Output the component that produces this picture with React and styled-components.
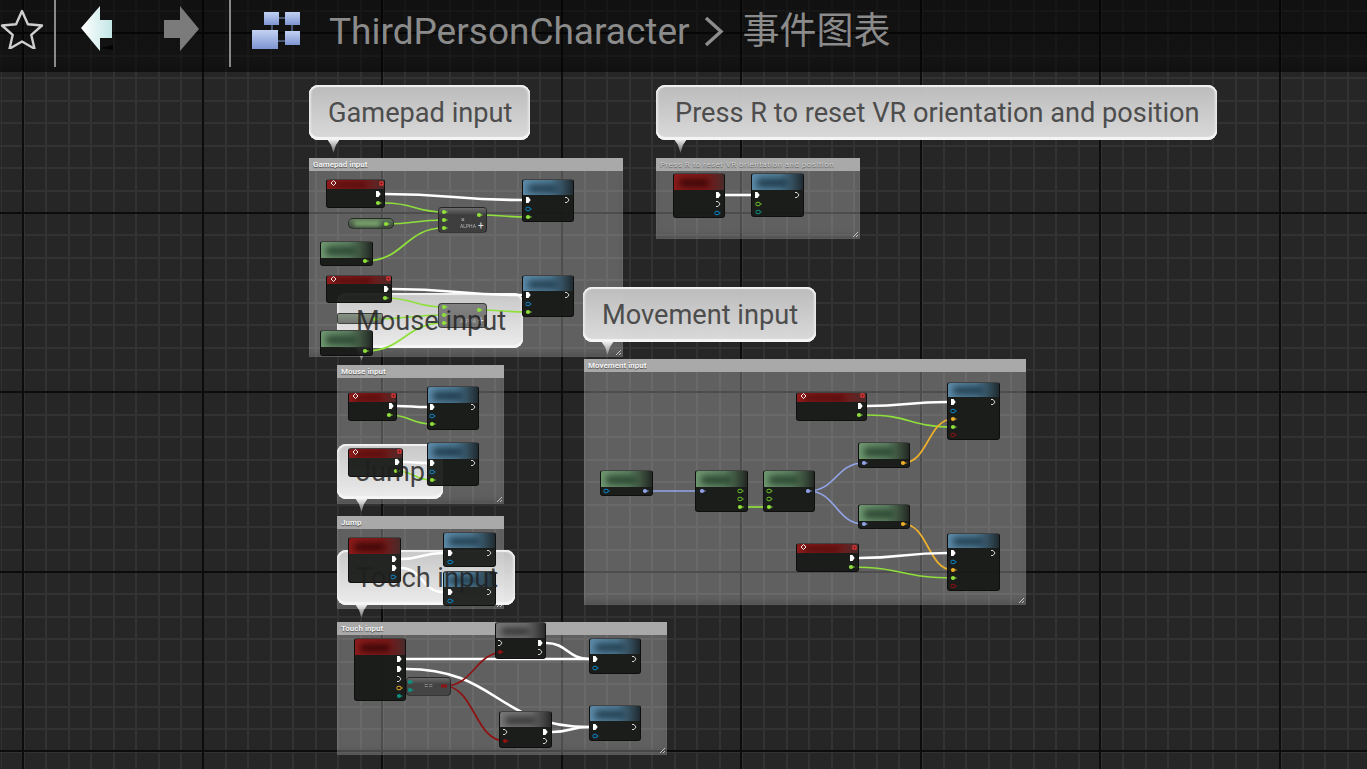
import React from "react";
import styled, { createGlobalStyle } from "styled-components";

const Global = createGlobalStyle`
  html, body { margin: 0; padding: 0; background: #262626; overflow: hidden; }
  #root { width: 1367px; height: 769px; }
`;

const Canvas = styled.div`
  position: relative;
  width: 1367px;
  height: 769px;
  overflow: hidden;
  font-family: Roboto, "Noto Sans CJK SC", sans-serif;
  background-color: #262626;
  background-image:
    repeating-linear-gradient(to right, transparent 0 22px, #0c0c0c 22px 24px, transparent 24px 179.5px),
    repeating-linear-gradient(to bottom, transparent 0 32px, #0c0c0c 32px 34px, transparent 34px 179.5px),
    repeating-linear-gradient(to right, transparent 0 0.5px, #323232 0.5px 2.5px, transparent 2.5px 22.44px),
    repeating-linear-gradient(to bottom, transparent 0 10px, #323232 10px 12px, transparent 12px 22.44px);
`;

const TopBar = styled.header`
  position: relative;
  z-index: 6;
  display: flex;
  align-items: flex-start;
  height: 72px;
  background: linear-gradient(to bottom, rgba(0,0,0,.56) 0, rgba(0,0,0,.5) 85%, rgba(0,0,0,.58) 100%);
  box-sizing: border-box;
`;

const Divider = styled.div`
  width: 2px;
  height: 67px;
  background: #8a8a8a;
  margin: 0 ${p => p.$right}px 0 ${p => p.$left}px;
`;

const IconSlot = styled.div`
  display: flex;
  flex: none;
  width: ${p => p.$w}px;
  margin-left: ${p => p.$ml || 0}px;
  margin-top: ${p => p.$mt || 0}px;
  filter: ${p => p.$soft ? "blur(.6px)" : "none"};
`;

const Crumb = styled.span`
  color: #8b8b8b;
  font-size: ${p => p.$size}px;
  line-height: 64px;
  white-space: nowrap;
  margin-left: ${p => p.$ml || 0}px;
`;

const Comment = styled.section`
  position: absolute;
  left: ${p => p.$x}px;
  top: ${p => p.$y}px;
  width: ${p => p.$w}px;
  height: ${p => p.$h}px;
  box-sizing: border-box;
  background: rgba(255,255,255,.27);
  box-shadow: inset 0 -6px 8px -4px rgba(0,0,0,.22), inset 0 0 0 1px rgba(255,255,255,.05);
  z-index: 1;
`;

const CommentHead = styled.h4`
  margin: 0;
  height: 13px;
  padding-left: 4px;
  background: #a9a9a9;
  color: ${p => p.$dim ? "#cfcfcf" : "#f2f2f2"};
  font-size: 8px;
  line-height: 14px;
  font-weight: ${p => p.$dim ? 400 : 700};
  letter-spacing: ${p => p.$dim ? ".45px" : "0"};
  text-shadow: 0 1px 1px rgba(0,0,0,.55);
  white-space: nowrap;
  overflow: hidden;
`;

const Grip = styled.svg`
  position: absolute;
  right: 1px;
  bottom: 1px;
`;

const BubbleBox = styled.div`
  position: absolute;
  left: ${p => p.$x}px;
  top: ${p => p.$y}px;
  width: ${p => p.$w}px;
  height: 55px;
  box-sizing: border-box;
  border-radius: 9px;
  box-shadow:
    inset 0 2px 1px #f2f2f2,
    inset 0 -3px 1px #f6f6f6,
    inset 2px 0 2px #e6e6e6,
    inset -2px 0 2px #e6e6e6;
  background: ${p => p.$light
    ? "linear-gradient(to bottom, rgba(208,208,208,.92), rgba(242,242,242,.96))"
    : "linear-gradient(to bottom, rgba(192,192,192,.97), rgba(224,224,224,.97))"};
  z-index: 2;
  &::after {
    content: "";
    position: absolute;
    left: 18px;
    top: 54px;
    width: 13px;
    height: 14px;
    background: linear-gradient(to bottom, #f4f4f4, rgba(225,225,225,.3));
    clip-path: polygon(0 0, 100% 0, 68% 45%, 50% 100%, 32% 45%);
  }
`;

const BubbleText = styled.div`
  position: absolute;
  left: ${p => p.$x + 19}px;
  top: ${p => p.$y}px;
  height: 55px;
  line-height: 57px;
  font-size: 27.2px;
  color: ${p => p.$light ? "rgba(30,30,30,.82)" : "#4d4d4d"};
  white-space: nowrap;
  z-index: 5;
`;

const tones = {
  red: "linear-gradient(to right, #8d1b1b 0%, #7e1818 62%, #4a2a2a 100%)",
  blue: "linear-gradient(to right, #5b8aa8 0%, #4d7892 55%, #1f2a30 100%)",
  green: "linear-gradient(to right, #6e976f 0%, #5c8060 55%, #222822 100%)",
  gray: "linear-gradient(to right, #777 0%, #6e6e6e 60%, #2a2a2a 100%)",
};
const smudges = { red: "#3c0707", blue: "#1f3a4a", green: "#2a4530", gray: "#343434" };

const Node = styled.article`
  position: absolute;
  left: ${p => p.$x}px;
  top: ${p => p.$y}px;
  width: ${p => p.$w}px;
  height: ${p => p.$h}px;
  box-sizing: border-box;
  border: 1px solid rgba(10,12,10,.75);
  border-top-color: rgba(70,72,70,.9);
  border-radius: 3px;
  background: rgba(22,24,22,.93);
  overflow: hidden;
  z-index: 4;
`;

const NodeHead = styled.div`
  position: relative;
  height: ${p => p.$h}px;
  background: ${p => tones[p.$tone]};
  overflow: hidden;
`;

const Smudge = styled.span`
  position: absolute;
  left: 10%;
  right: 30%;
  top: 32%;
  bottom: 18%;
  background: ${p => smudges[p.$tone]};
  filter: blur(3px);
  border-radius: 3px;
`;

const Pill = styled.div`
  position: absolute;
  left: ${p => p.$x}px;
  top: ${p => p.$y}px;
  width: ${p => p.$w}px;
  height: ${p => p.$h}px;
  box-sizing: border-box;
  border: 1px solid rgba(20,22,20,.6);
  border-radius: ${p => p.$r}px;
  background: ${p => p.$bg};
  z-index: 4;
  overflow: hidden;
`;

const PillSmudge = styled.span`
  position: absolute;
  left: 12%;
  right: 30%;
  top: 2px;
  height: 5px;
  background: #7fae6f;
  filter: blur(2px);
`;

const Mini = styled.span`
  position: absolute;
  left: ${p => p.$x}px;
  top: ${p => p.$y}px;
  color: ${p => p.$soft ? "#b4b4b4" : "#e4e4e4"};
  font-size: ${p => p.$size}px;
  line-height: 1;
  white-space: nowrap;
  filter: ${p => p.$soft ? "blur(.4px)" : "none"};
`;

const Layer = styled.svg`
  position: absolute;
  left: 0;
  top: 0;
  z-index: ${p => p.$z};
  pointer-events: none;
`;

const comments = [
  { x: 309, y: 158, w: 314, h: 199, t: "Gamepad input" },
  { x: 656, y: 158, w: 204, h: 81, t: "Press R to reset VR orientation and position", dim: true },
  { x: 337, y: 365, w: 167, h: 139, t: "Mouse input" },
  { x: 337, y: 516, w: 167, h: 93, t: "Jump" },
  { x: 337, y: 622, w: 330, h: 133, t: "Touch input" },
  { x: 584, y: 359, w: 442, h: 246, t: "Movement input" },
];

const bubbles = [
  { x: 309, y: 85, w: 221, t: "Gamepad input" },
  { x: 656, y: 85, w: 561, t: "Press R to reset VR orientation and position" },
  { x: 583, y: 287, w: 233, t: "Movement input" },
  { x: 337, y: 293, w: 186, t: "Mouse input", light: true },
  { x: 337, y: 444, w: 106, t: "Jump", light: true },
  { x: 337, y: 550, w: 178, t: "Touch input", light: true },
];

const nodes = [
  [326, 179, 59, 29, "red", 9],
  [320, 241, 53, 25, "green", 16],
  [522, 179, 52, 43, "blue", 15],
  [326, 275, 66, 28, "red", 8],
  [522, 275, 52, 42, "blue", 15],
  [320, 330, 53, 26, "green", 16],
  [673, 173, 52, 45, "red", 16],
  [751, 173, 53, 44, "blue", 16],
  [348, 392, 49, 29, "red", 9],
  [427, 386, 52, 44, "blue", 16],
  [348, 448, 55, 29, "red", 9],
  [427, 442, 52, 44, "blue", 16],
  [348, 537, 53, 46, "red", 16],
  [443, 532, 53, 35, "blue", 15],
  [443, 571, 53, 35, "blue", 15],
  [354, 638, 52, 63, "red", 16],
  [495, 622, 51, 37, "gray", 15],
  [499, 711, 53, 37, "gray", 15],
  [589, 638, 52, 36, "blue", 15],
  [589, 705, 52, 36, "blue", 15],
  [796, 392, 71, 29, "red", 9],
  [947, 382, 53, 58, "blue", 14],
  [858, 442, 52, 26, "green", 16],
  [858, 504, 52, 25, "green", 16],
  [600, 470, 53, 26, "green", 16],
  [695, 470, 53, 42, "green", 16],
  [763, 470, 52, 42, "green", 16],
  [796, 543, 63, 29, "red", 9],
  [947, 533, 53, 58, "blue", 14],
];

const C = { w: "#ffffff", g: "#8fe03a", v: "#93a4e8", o: "#eeb02a", r: "#8e1212", t: "#0e8f7e", b: "#0a86c8" };

const curve = (a, b, c, d) => {
  const k = Math.max(Math.abs(c - a) * 0.5, 12);
  return `M${a} ${b}C${a + k} ${b} ${c - k} ${d} ${c} ${d}`;
};

const wires = [
  [385, 194, 522, 200, C.w], [385, 203, 444, 212, C.g], [386, 224, 444, 220, C.g], [365, 261, 444, 228, C.g], [479, 215, 528, 217, C.g],
  [392, 289, 522, 295, C.w], [385, 298, 444, 307, C.g], [375, 319, 444, 315, C.g], [365, 351, 444, 323, C.g], [479, 310, 528, 312, C.g],
  [725, 195, 751, 195, C.w],
  [397, 406, 427, 407, C.w], [389, 415, 432, 424, C.g], [403, 462, 427, 463, C.w], [396, 471, 432, 480, C.g],
  [401, 559, 443, 553, C.w], [401, 568, 443, 592, C.w],
  [406, 659, 589, 659, C.w], [546, 643, 589, 659, C.w], [406, 669, 589, 727, C.w], [552, 732, 589, 727, C.w],
  [444, 686, 505, 652, C.r], [444, 686, 505, 741, C.r],
  [867, 406, 947, 402, C.w], [867, 415, 953, 427, C.g], [903, 463, 953, 419, C.o], [903, 524, 953, 570, C.o],
  [645, 491, 702, 491, C.v], [740, 507, 769, 507, C.g], [808, 491, 864, 463, C.v], [808, 491, 864, 524, C.v],
  [859, 558, 947, 553, C.w], [851, 567, 953, 578, C.g],
];

const pins = [
  ["e", 378, 194], ["d", 378, 203, C.g], ["e", 528, 200], ["x", 567, 200], ["h", 528, 209, C.b], ["d", 528, 217, C.g],
  ["d", 444, 212, C.g], ["d", 444, 220, C.g], ["d", 444, 228, C.g], ["d", 479, 215, C.g], ["d", 386, 224, C.g], ["d", 365, 261, C.g],
  ["e", 386, 289], ["d", 385, 298, C.g], ["e", 528, 295], ["x", 567, 295], ["h", 528, 304, C.b], ["d", 528, 312, C.g],
  ["d", 444, 307, C.g], ["d", 444, 315, C.g], ["d", 444, 323, C.g], ["d", 479, 310, C.g], ["d", 375, 319, C.g], ["d", 365, 351, C.g],
  ["e", 718, 195], ["x", 718, 204], ["h", 717, 213, C.b], ["e", 757, 195], ["x", 797, 195], ["h", 758, 204, "#6cc22c"], ["h", 758, 212, C.t],
  ["e", 391, 406], ["d", 389, 415, C.g], ["e", 432, 407], ["x", 473, 407], ["h", 432, 416, C.b], ["d", 432, 424, C.g],
  ["e", 397, 462], ["d", 396, 471, C.g], ["e", 432, 463], ["x", 473, 463], ["h", 432, 472, C.b], ["d", 432, 480, C.g],
  ["e", 394, 559], ["e", 394, 568], ["h", 393, 577, C.b], ["e", 450, 553], ["x", 489, 553], ["h", 450, 562, C.b], ["e", 450, 592], ["x", 489, 592], ["h", 450, 601, C.b],
  ["e", 399, 659], ["e", 399, 669], ["x", 399, 679], ["h", 399, 688, C.o], ["d", 399, 696, C.t],
  ["d", 410, 682, C.t], ["d", 410, 690, C.t], ["s", 444, 686, C.r],
  ["x", 500, 643], ["d", 500, 652, C.r], ["e", 540, 643], ["x", 540, 652],
  ["x", 505, 732], ["d", 505, 741, C.r], ["e", 545, 732], ["x", 545, 741],
  ["e", 595, 659], ["x", 634, 659], ["h", 595, 668, C.b], ["e", 595, 727], ["x", 634, 727], ["h", 595, 736, C.b],
  ["e", 860, 406], ["d", 859, 415, C.g], ["e", 953, 402], ["x", 993, 402], ["h", 953, 411, C.b], ["d", 953, 419, C.o], ["d", 953, 427, C.g], ["h", 953, 435, C.r],
  ["d", 864, 463, C.v], ["d", 903, 463, C.o], ["d", 864, 524, C.v], ["d", 903, 524, C.o],
  ["h", 606, 491, C.b], ["d", 645, 491, C.v], ["d", 702, 491, C.v], ["h", 740, 491, "#6cc22c"], ["h", 740, 499, "#6cc22c"], ["d", 740, 507, C.g],
  ["h", 769, 491, "#6cc22c"], ["h", 769, 499, "#6cc22c"], ["d", 769, 507, C.g], ["d", 808, 491, C.v],
  ["e", 852, 558], ["d", 851, 567, C.g], ["e", 953, 553], ["x", 993, 553], ["h", 953, 562, C.b], ["d", 953, 570, C.o], ["d", 953, 578, C.g], ["h", 953, 586, C.r],
];

const eventMarks = [[331, 183, 380, 182], [331, 279, 387, 277], [353, 396, 392, 394], [353, 452, 398, 450], [801, 396, 861, 394], [801, 547, 853, 546]];

const Pin = ({ k, x, y, c }) => {
  if (k === "e") return <path d={`M${x - 2} ${y - 3}h2.5l2.2 3l-2.2 3h-2.5z`} fill="#fff" />;
  if (k === "x") return <path d={`M${x - 2} ${y - 2.5}h2l2 2.5l-2 2.5h-2`} fill="none" stroke="#e8e8e8" strokeWidth=".9" />;
  if (k === "s") return <rect x={x - 3} y={y - 1.5} width="6" height="3" fill={c} />;
  const arrow = <path d={`M${x + 2.4} ${y - 1}l1.6 1l-1.6 1z`} fill={c} />;
  if (k === "h") return <g><rect x={x - 2} y={y - 1.7} width="4" height="3.4" rx="1" fill="none" stroke={c} strokeWidth="1" />{arrow}</g>;
  return <g><circle cx={x} cy={y} r="2.1" fill={c} />{arrow}</g>;
};

const App = () => (
  <Canvas>
    <Global />
    <TopBar>
      <IconSlot $w={46} $mt={9}>
        <svg width="46" height="40" viewBox="0 0 46 40">
          <path d="M22 2l5.9 13.2 14.1 1.3-10.7 9.4 3.2 13.8L22 32.5 9.5 39.7l3.2-13.8L2 16.5l14.1-1.3z" fill="none" stroke="#cfcfcf" strokeWidth="2.4" strokeLinejoin="round" />
        </svg>
      </IconSlot>
      <Divider $left={8} $right={24} />
      <IconSlot $w={36} $mt={4} $soft>
        <svg width="36" height="50" viewBox="0 0 36 50">
          <defs>
            <linearGradient id="backFill" x1="0" y1="0" x2="1" y2="0">
              <stop offset="0" stopColor="#ffffff" />
              <stop offset="1" stopColor="#c4e6e6" />
            </linearGradient>
          </defs>
          <path d="M20 44l13 2v-5z" fill="#000" opacity=".8" />
          <path d="M20 2L1 24l19 23V34h12V16H20z" fill="url(#backFill)" />
        </svg>
      </IconSlot>
      <IconSlot $w={36} $ml={48} $mt={4} $soft>
        <svg width="36" height="50" viewBox="0 0 36 50">
          <path d="M16 2l19 23L16 47V34H0V16h16z" fill="#7b7b7b" />
        </svg>
      </IconSlot>
      <Divider $left={29} $right={21} />
      <IconSlot $w={50} $mt={11} $soft>
        <svg width="50" height="40" viewBox="0 0 50 40">
          <defs>
            <linearGradient id="gridFill" x1="0" y1="0" x2="0" y2="1">
              <stop offset="0" stopColor="#c3d2f3" />
              <stop offset="1" stopColor="#7e95d2" />
            </linearGradient>
          </defs>
          <path d="M20 7h20M40 7v23M26 30h14M20 7v12" stroke="#46536f" strokeWidth="2" fill="none" />
          <rect x="12" y="1" width="15" height="13" fill="url(#gridFill)" />
          <rect x="33" y="1" width="15" height="13" fill="url(#gridFill)" />
          <rect x="33" y="20" width="15" height="14" fill="url(#gridFill)" />
          <rect x="0" y="19" width="26" height="19" fill="url(#gridFill)" />
        </svg>
      </IconSlot>
      <Crumb $size={37} $ml={27}>ThirdPersonCharacter</Crumb>
      <IconSlot $w={20} $ml={14} $mt={17}>
        <svg width="20" height="30" viewBox="0 0 20 30">
          <path d="M2 1l15 13.5L2 28" fill="none" stroke="#8d8d8d" strokeWidth="3.4" />
        </svg>
      </IconSlot>
      <Crumb $size={37} $ml={19}>事件图表</Crumb>
    </TopBar>

    {comments.map(c => (
      <Comment key={c.t} $x={c.x} $y={c.y} $w={c.w} $h={c.h}>
        <CommentHead $dim={c.dim}>{c.t}</CommentHead>
        <Grip width="7" height="7" viewBox="0 0 7 7">
          <path d="M1 6l5-5M4 6l2-2" stroke="#c4c4c4" strokeWidth="1" />
        </Grip>
      </Comment>
    ))}

    {bubbles.map(b => <BubbleBox key={b.t} $x={b.x} $y={b.y} $w={b.w} $light={b.light} />)}

    <Layer $z={3} width="1367" height="769">
      {wires.map(([a, b, c, d, col], i) => (
        <path key={i} d={curve(a, b, c, d)} fill="none" stroke={col} strokeWidth={col === C.w ? 2.6 : 1.7} />
      ))}
    </Layer>

    {nodes.map(([x, y, w, h, tone, hh], i) => (
      <Node key={i} $x={x} $y={y} $w={w} $h={h}>
        <NodeHead $tone={tone} $h={hh}><Smudge $tone={tone} /></NodeHead>
      </Node>
    ))}

    <Pill $x={348} $y={218} $w={46} $h={11} $r={5} $bg="linear-gradient(to bottom, #5f7a5c, #3b443b)"><PillSmudge /></Pill>
    <Pill $x={337} $y={313} $w={46} $h={11} $r={2} $bg="linear-gradient(to bottom, rgba(120,135,115,.85), rgba(95,100,95,.85))" />
    <Pill $x={438} $y={207} $w={49} $h={26} $r={4} $bg="linear-gradient(to bottom, #6d6d6d, #3d3d3d 30%, #3e3e3e)">
      <Mini $x={22} $y={9} $size={7} $soft>×</Mini>
      <Mini $x={21} $y={16} $size={5} $soft>ALPHA</Mini>
      <Mini $x={39} $y={13} $size={10}>+</Mini>
    </Pill>
    <Pill $x={438} $y={303} $w={49} $h={25} $r={4} $bg="linear-gradient(to bottom, rgba(120,120,120,.9), rgba(105,105,105,.9))">
      <Mini $x={21} $y={15} $size={5} $soft>ALPHA</Mini>
      <Mini $x={39} $y={12} $size={10}>+</Mini>
    </Pill>
    <Pill $x={406} $y={677} $w={45} $h={19} $r={4} $bg="linear-gradient(to bottom, #6a6a6a, #444 35%, #454545)">
      <Mini $x={17} $y={4} $size={8} $soft>==</Mini>
    </Pill>

    <Layer $z={4} width="1367" height="769">
      {pins.map(([k, x, y, c], i) => <Pin key={i} k={k} x={x} y={y} c={c} />)}
      {eventMarks.map(([a, b, c, d], i) => (
        <g key={i}>
          <path d={`M${a} ${b}l2.5 -2.5l2.5 2.5l-2.5 2.5z`} fill="none" stroke="#fff" strokeWidth=".9" />
          <rect x={c} y={d} width="3" height="3" fill="#5a1010" stroke="#ff4040" strokeWidth="1" />
        </g>
      ))}
    </Layer>

    {bubbles.map(b => <BubbleText key={b.t} $x={b.x} $y={b.y} $light={b.light}>{b.t}</BubbleText>)}
  </Canvas>
);

export default App;
